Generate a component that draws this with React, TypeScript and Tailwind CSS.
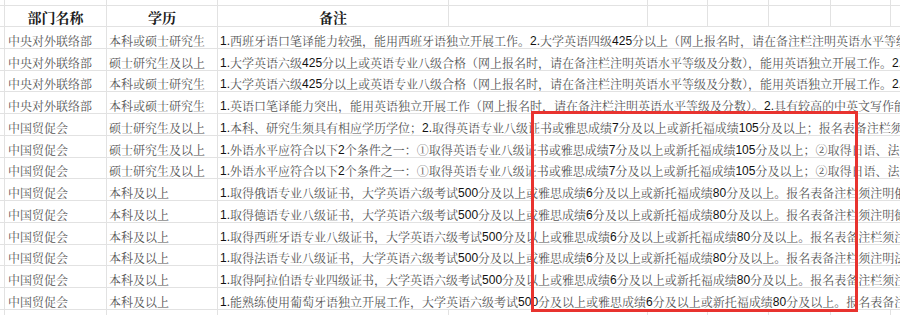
import React from "react";

const rows: [string, string, string][] = [
  ["中央对外联络部", "本科或硕士研究生", "1.西班牙语口笔译能力较强，能用西班牙语独立开展工作。2.大学英语四级425分以上（网上报名时，请在备注栏注明英语水平等级及分数）。"],
  ["中央对外联络部", "硕士研究生及以上", "1.大学英语六级425分以上或英语专业八级合格（网上报名时，请在备注栏注明英语水平等级及分数），能用英语独立开展工作。2.具有"],
  ["中央对外联络部", "本科或硕士研究生", "1.大学英语六级425分以上或英语专业八级合格（网上报名时，请在备注栏注明英语水平等级及分数），能用英语独立开展工作。2.具有"],
  ["中央对外联络部", "本科或硕士研究生", "1.英语口笔译能力突出，能用英语独立开展工作（网上报名时，请在备注栏注明英语水平等级及分数）。2.具有较高的中英文写作能力。"],
  ["中国贸促会", "硕士研究生及以上", "1.本科、研究生须具有相应学历学位；2.取得英语专业八级证书或雅思成绩7分及以上或新托福成绩105分及以上；报名表备注栏须注明。"],
  ["中国贸促会", "硕士研究生及以上", "1.外语水平应符合以下2个条件之一：①取得英语专业八级证书或雅思成绩7分及以上或新托福成绩105分及以上；②取得日语、法语"],
  ["中国贸促会", "硕士研究生及以上", "1.外语水平应符合以下2个条件之一：①取得英语专业八级证书或雅思成绩7分及以上或新托福成绩105分及以上；②取得日语、法语"],
  ["中国贸促会", "本科及以上", "1.取得俄语专业八级证书，大学英语六级考试500分及以上或雅思成绩6分及以上或新托福成绩80分及以上。报名表备注栏须注明俄语"],
  ["中国贸促会", "本科及以上", "1.取得德语专业八级证书，大学英语六级考试500分及以上或雅思成绩6分及以上或新托福成绩80分及以上。报名表备注栏须注明德语"],
  ["中国贸促会", "本科及以上", "1.取得西班牙语专业八级证书，大学英语六级考试500分及以上或雅思成绩6分及以上或新托福成绩80分及以上。报名表备注栏须注明"],
  ["中国贸促会", "本科及以上", "1.取得法语专业八级证书，大学英语六级考试500分及以上或雅思成绩6分及以上或新托福成绩80分及以上。报名表备注栏须注明法语"],
  ["中国贸促会", "本科及以上", "1.取得阿拉伯语专业四级证书，大学英语六级考试500分及以上或雅思成绩6分及以上或新托福成绩80分及以上。报名表备注栏须注明"],
  ["中国贸促会", "本科及以上", "1.能熟练使用葡萄牙语独立开展工作，大学英语六级考试500分及以上或雅思成绩6分及以上或新托福成绩80分及以上。报名表备注栏须"],
];

function Remark({ text }: { text: string }) {
  const parts = text.split(/(\d+\.?)/);
  return (
    <>
      {parts.map((p, i) =>
        /^\d/.test(p) ? (
          <span key={i} className="font-['Liberation_Sans',sans-serif] text-[#111]">
            {p}
          </span>
        ) : (
          <span key={i}>{p}</span>
        )
      )}
    </>
  );
}

function FrameRow({ h, header }: { h: string; header?: boolean }) {
  return (
    <div className={`flex border-b border-[#e2e2e2] ${h}`}>
      <div className="w-[4px] shrink-0" />
      <div className="w-[102px] shrink-0 border-l border-[#e2e2e2] flex items-center justify-center pt-[1px]">
        {header && <span className="text-[14px] font-bold text-[#1a1a1a] leading-[14px]">部门名称</span>}
      </div>
      <div className="w-[111px] shrink-0 border-l border-[#e2e2e2] flex items-center justify-center pt-[1px]">
        {header && <span className="text-[14px] font-bold text-[#1a1a1a] leading-[14px]">学历</span>}
      </div>
      <div className="w-[231px] shrink-0 border-l border-[#e2e2e2] flex items-center justify-center pt-[1px]">
        {header && <span className="text-[14px] font-bold text-[#1a1a1a] leading-[14px]">备注</span>}
      </div>
      <div className="w-[199px] shrink-0 border-l border-[#e2e2e2]" />
      <div className="w-[60px] shrink-0 border-l border-[#e2e2e2]" />
      <div className="w-[61px] shrink-0 border-l border-[#e2e2e2]" />
      <div className="w-[62px] shrink-0 border-l border-[#e2e2e2]" />
      <div className="w-[60px] shrink-0 border-l border-[#e2e2e2]" />
      <div className="flex-1 border-l border-[#e2e2e2]" />
    </div>
  );
}

export default function App() {
  return (
    <div className="relative w-[900px] h-[315px] overflow-hidden bg-white font-['Noto_Serif_CJK_SC','Noto_Sans_CJK_SC',sans-serif]">
      <FrameRow h="h-[6px]" />
      <FrameRow h="h-[21px]" header />
      {rows.map((r, i) => (
        <div key={i} className="flex h-[21.77px] border-b border-[#e2e2e2] text-[12px] leading-[12px] text-[#555]">
          <div className="w-[4px] shrink-0" />
          <div className="w-[102px] shrink-0 border-l border-[#e2e2e2] flex items-end pl-[3px] pb-[1px] whitespace-nowrap overflow-hidden">
            {r[0]}
          </div>
          <div className="w-[111px] shrink-0 border-l border-[#e2e2e2] flex items-end pl-[2px] pb-[1px] whitespace-nowrap overflow-hidden">
            {r[1]}
          </div>
          <div className="flex-1 border-l border-[#e2e2e2] flex items-end pl-[2px] pb-[1px] whitespace-nowrap overflow-hidden">
            <Remark text={r[2]} />
          </div>
        </div>
      ))}
      <FrameRow h="h-[20px]" />
      <div className="absolute left-[531px] top-[111px] w-[327px] h-[201px] border-[3px] border-[#e8332f]" />
    </div>
  );
}
